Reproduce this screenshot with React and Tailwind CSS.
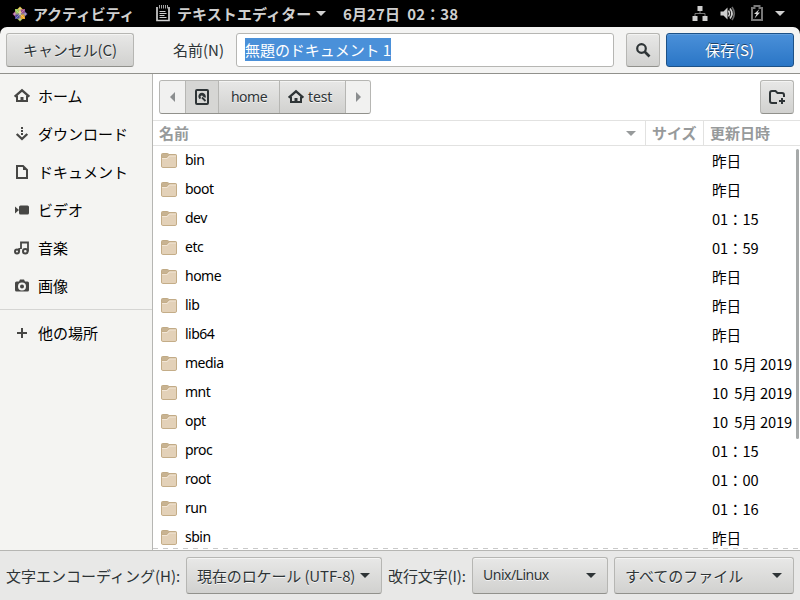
import React from "react";

const files = [
  ["bin", "昨日"],
  ["boot", "昨日"],
  ["dev", "01：15"],
  ["etc", "01：59"],
  ["home", "昨日"],
  ["lib", "昨日"],
  ["lib64", "昨日"],
  ["media", "10  5月 2019"],
  ["mnt", "10  5月 2019"],
  ["opt", "10  5月 2019"],
  ["proc", "01：15"],
  ["root", "01：00"],
  ["run", "01：16"],
  ["sbin", "昨日"],
];

const button =
  "flex items-center rounded-[3px] border border-[#b6b6b3] border-b-[#91918c] bg-linear-to-b from-[#e8e8e7] to-[#d1d1cf] text-[#2e3436] shadow-[inset_0_1px_#f4f4f3] [text-shadow:0_1px_rgba(255,255,255,0.75)]";
const latin = "font-['Noto_Sans','Noto_Sans_CJK_JP',sans-serif] text-[14px] tracking-[-0.5px]";

function Caret({ className = "" }) {
  return (
    <svg viewBox="0 0 10 5" className={`h-[5px] w-[10px] shrink-0 fill-current ${className}`}>
      <path d="M0 0h10L5 5z" />
    </svg>
  );
}

function Icon({ children, className = "" }) {
  return (
    <svg viewBox="0 0 16 16" className={`size-4 shrink-0 ${className}`} fill="none" stroke="currentColor" strokeWidth="2">
      {children}
    </svg>
  );
}

function HomeIcon({ className }) {
  return (
    <Icon className={className}>
      <path d="M.7 8.700 8 2.300l7.300 6.400" strokeWidth="2.200" />
      <path d="M3 7.500V13h10V7.500" />
      <path d="M6.500 9h3v4h-3z" fill="currentColor" stroke="none" />
    </Icon>
  );
}

function FolderIcon() {
  return (
    <svg viewBox="0 0 16 16" className="size-4 shrink-0">
      <path d="M.5 13V2.500Q.5 1.500 1.500 1.500h5q1 0 1.300 1h6.700q1 0 1 1V13z" fill="#c8b392" stroke="#c0aa85" />
      <path d="M.5 5.500h5.300L8 3h6.500q1 0 1 1v10q0 1.500-1.300 1.500H1.800Q.5 15.500 .5 14z" fill="#e3d1b8" stroke="#c4ad88" />
      <path d="M1 6.500h5.300l2-2.500H15" stroke="#f2e6d6" fill="none" />
    </svg>
  );
}

function SidebarItem({ label, children }) {
  return (
    <div className="flex h-[38px] items-center gap-2 pl-[14px] text-black">
      <span className="text-[#474745]">{children}</span>
      <span>{label}</span>
    </div>
  );
}

function TopBar() {
  return (
    <div className="flex h-[27px] shrink-0 items-center bg-black text-[15px] font-bold text-[#cfcfcf]">
      <svg viewBox="0 0 16 16" className="ml-3 size-4">
        <path d="M3 3h4.500v4.500H3z" fill="#9ccd5a" />
        <path d="M8.500 3H13v4.500H8.500z" fill="#9c4f91" />
        <path d="M3 8.500h4.500V13H3z" fill="#4b4aa0" />
        <path d="M8.500 8.500H13V13H8.500z" fill="#efa724" />
        <path d="M8 .5l3 3H5zM8 3l1.500 4h-3z" fill="#e5c94b" />
        <path d="M.5 8l3-3v6z" fill="#b45b9c" />
        <path d="M15.500 8l-3 3V5z" fill="#6f66ae" />
        <path d="M8 15.500l-3-3h6z" fill="#a5b95b" />
        <path d="M8 2v12M2 8h12" stroke="#eadfda" strokeWidth=".9" />
        <path d="m4 4 8 8M12 4l-8 8" stroke="#eadfda" strokeWidth=".4" />
      </svg>
      <span className="ml-[5px] w-[101px] whitespace-nowrap tracking-[-0.15px]">アクティビティ</span>
      <svg viewBox="0 0 14 17" className="-mt-px ml-[22px] h-[17px] w-[14px]" fill="none" stroke="currentColor">
        <path d="M1 2v13.500h12V2" strokeWidth="1.700" />
        <path d="M3.500 0v3.500M5.500 0v3.500M7.500 0v3.500M9.500 0v3.500M11.500 0v3.500" strokeWidth=".8" />
        <path d="M3.500 6.500h6M3.500 8.500h7M3.500 10.500h5M3.500 12.500h7" />
      </svg>
      <span className="ml-[7px] w-[136px] whitespace-nowrap tracking-[0.1px]">テキストエディター</span>
      <Caret className="ml-[3px]" />
      <span className="ml-[17px] whitespace-pre tracking-[0.13px]">6月27日  02：38</span>
      <div className="ml-auto flex items-center pr-[15px]">
        <svg viewBox="0 0 16 16" className="size-4 fill-current">
          <path d="M5.500 0h5v5h-5zM.5 10h5v5h-5zM10.500 10h5v5h-5z" />
          <path d="M8 5v2.500M3 10V7.500h10V10" fill="none" stroke="#777" />
        </svg>
        <svg viewBox="0 0 16 16" className="ml-[12px] size-4" fill="none" stroke="currentColor">
          <path d="M.5 5.500h3L7.500 1.500v12l-4-4h-3z" fill="currentColor" stroke="none" />
          <path d="M8.500 4.500q2 3 0 6" strokeWidth="1.500" />
          <path d="M10 2.500q4 5 0 10" strokeWidth="1.700" />
          <path d="M12 1q4.500 6.500 0 13" stroke="#666" strokeWidth="1.700" />
        </svg>
        <svg viewBox="0 0 12 16" className="-mt-px ml-[15px] h-4 w-3">
          <path d="M1 3h2.500V1h5v2H11v12H1z" fill="none" stroke="#777" strokeWidth="2" />
          <path d="M8.500 4 3 9h2.500L3.500 13.500l5.500-6H6.500z" fill="#d5d5d5" />
        </svg>
        <Caret className="ml-[12px]" />
      </div>
    </div>
  );
}

function HeaderBar() {
  return (
    <div className="h-[47px] shrink-0 bg-black">
      <div className="flex h-full items-center rounded-t-[7px] border-b border-[#91918c] bg-[#f4f4f3] pl-[6px] pr-[6px]">
        <button className={`${button} h-[34px] w-[128px] justify-center`}>
          <span className="tracking-[-0.1px]">キャンセル(C)</span>
        </button>
        <span className="ml-[39px] w-[63px] text-[#2e3436]">名前(N)</span>
        <div className="flex h-[34px] w-[378px] items-center rounded-[3px] border border-[#b6b6b3] bg-white pl-2">
          <span className="-mt-px h-[23px] bg-[#4a90d9] leading-[24px] tracking-[-0.05px] text-white">無題のドキュメント 1</span>
        </div>
        <button className={`${button} ml-3 size-[34px] justify-center`}>
          <Icon>
            <circle cx="6.500" cy="6.500" r="4.300" strokeWidth="2.200" />
            <path d="m9.500 9.500 5 5" strokeWidth="2.600" />
          </Icon>
        </button>
        <button className="ml-[6px] h-[34px] w-[128px] rounded-[3px] border border-[#1c5187] bg-linear-to-b from-[#4a90d9] to-[#2a76c6] pr-[1px] text-white shadow-[inset_0_1px_#629fde] [text-shadow:0_-1px_rgba(0,0,0,0.5)]">
          保存(S)
        </button>
      </div>
    </div>
  );
}

function Sidebar() {
  return (
    <div className="w-[153px] shrink-0 border-r border-[#b6b6b3] bg-[#f4f4f2] pt-[3px]">
      <SidebarItem label="ホーム"><HomeIcon /></SidebarItem>
      <SidebarItem label="ダウンロード">
        <Icon>
          <path d="M8 1v2M8 4v2M8 7v2" />
          <path d="m2.700 8 5.300 5 5.300-5" strokeWidth="2.300" />
        </Icon>
      </SidebarItem>
      <SidebarItem label="ドキュメント">
        <Icon><path d="M3 2h6l4 4v8H3z" /><path d="M9 2v4h4z" fill="currentColor" stroke="none" /></Icon>
      </SidebarItem>
      <SidebarItem label="ビデオ">
        <Icon><path d="M1 4.500 5 8l-4 3.500zM6.500 3.500h7q1.500 0 1.500 1.500v6q0 1.500-1.500 1.500h-7Q5 12.500 5 11V5q0-1.500 1.500-1.500z" fill="currentColor" stroke="none" /></Icon>
      </SidebarItem>
      <SidebarItem label="音楽">
        <Icon>
          <circle cx="3" cy="11.500" r="2" />
          <circle cx="11.300" cy="11.300" r="2.300" />
          <path d="M5.200 11.500V8M7 9V2.500h7V11.500" strokeWidth="1.800" />
        </Icon>
      </SidebarItem>
      <SidebarItem label="画像">
        <Icon>
          <path fillRule="evenodd" fill="currentColor" stroke="none" d="M2.500 3.500H5l1-2h4l1 2h2.500q1.500 0 1.500 1.500v7q0 1.500-1.500 1.500h-11Q1 13.500 1 12V5q0-1.500 1.500-1.500zM8 4.500a4 4 0 1 0 0 8 4 4 0 0 0 0-8zm0 2a2 2 0 1 1 0 4 2 2 0 0 1 0-4z" />
        </Icon>
      </SidebarItem>
      <div className="mt-[4px] mb-[4px] h-px bg-[#d5d5d3]" />
      <SidebarItem label="他の場所"><Icon><path d="M8 3v10M3 8h10" /></Icon></SidebarItem>
    </div>
  );
}

function PathBar() {
  return (
    <div className="flex h-[46px] shrink-0 items-center justify-between pl-[6px] pr-[6px]">
      <div className={`${button} ${latin} h-[34px] w-[212px] overflow-hidden`}>
        <div className="flex h-full w-[26px] items-center justify-center border-r border-[#b6b6b3] bg-[#f1f1f0] text-[#8b8e8f]">
          <svg viewBox="0 0 5 10" className="h-[10px] w-[5px] fill-current"><path d="M5 0v10L0 5z" /></svg>
        </div>
        <div className="flex h-full w-[33px] items-center justify-center border-r border-[#b6b6b3] bg-[#d6d6d4]">
          <Icon>
            <rect x="2" y="1" width="12" height="14" rx="1" />
            <path fillRule="evenodd" d="M8 3.800a3.700 3.700 0 0 0-2.600 6.300Q6.700 10 7 8.700a1.200 1.200 0 1 1 1.900-1.300L11.500 9A3.700 3.700 0 0 0 8 3.800z" fill="currentColor" stroke="none" />
            <path d="m8 8.500 3.500 3.500" strokeWidth="1.800" />
          </Icon>
        </div>
        <div className="flex h-full w-[61px] items-center justify-center border-r border-[#b6b6b3]">home</div>
        <div className="flex h-full w-[66px] items-center gap-1 border-r border-[#b6b6b3] pl-2">
          <HomeIcon /><span className="tracking-[-0.1px]">test</span>
        </div>
        <div className="flex h-full flex-1 items-center justify-center bg-[#f1f1f0] text-[#8b8e8f]">
          <svg viewBox="0 0 5 10" className="h-[10px] w-[5px] fill-current"><path d="M0 0v10l5-5z" /></svg>
        </div>
      </div>
      <button className={`${button} size-[34px] justify-center`}>
        <Icon>
          <path d="M8 14H3Q1 14 1 12V4Q1 2 3 2h3.500l2 2H13q2 0 2 2v2" />
          <path d="M13 9v6M10 12h6" />
        </Icon>
      </button>
    </div>
  );
}

function FileList() {
  return (
    <div className="flex min-w-0 flex-1 flex-col bg-white">
      <PathBar />
      <div className="flex h-[26px] shrink-0 border-y border-[#e2e2e1] font-bold leading-[24px] text-[#979a9b]">
        <div className="flex w-[493px] items-center justify-between border-r border-[#e2e2e1] pl-[6px] pr-[9px]">
          <span>名前</span><Caret />
        </div>
        <div className="w-[58px] border-r border-[#e2e2e1] pl-[6px]">サイズ</div>
        <div className="pl-[6px]">更新日時</div>
      </div>
      <div className="relative h-[404px] overflow-hidden text-black">
        <div className="-mt-px">
          {files.map(([name, date]) => (
            <div key={name} className="flex h-[29px] items-center pl-2">
              <FolderIcon />
              <span className={`${latin} ml-2 w-[527px] leading-[20px]`}>{name}</span>
              <span className="whitespace-pre pt-[2px] text-[14.67px] tracking-[-0.12px]">{date}</span>
            </div>
          ))}
        </div>
        <div className="absolute right-px top-[3px] h-[290px] w-[3px] rounded-full bg-[#a6a9a9]" />
        <div className="absolute bottom-px left-0 h-px w-full bg-[repeating-linear-gradient(90deg,#c9c9c9_0_5px,transparent_5px_10px)]" />
      </div>
    </div>
  );
}

function Footer() {
  return (
    <div className="flex h-[50px] shrink-0 items-center border-t border-[#b6b6b3] bg-[#e8e8e7] pl-[6px] text-[#2e3436]">
      <span className="w-[180px] whitespace-nowrap">文字エンコーディング(H):</span>
      <button className={`${button} h-[37px] w-[196px] justify-between pl-[10px] pr-[11px]`}>
        <span className="whitespace-nowrap tracking-[-0.12px]">現在のロケール (UTF-8)</span><Caret />
      </button>
      <span className="ml-[6px] w-[84px] whitespace-nowrap tracking-[-0.1px]">改行文字(I):</span>
      <button className={`${button} h-[37px] w-[136px] justify-between pl-[10px] pr-[11px]`}>
        <span className={`${latin} -mt-px`}>Unix/Linux</span><Caret />
      </button>
      <button className={`${button} ml-[6px] h-[37px] w-[180px] justify-between pl-[10px] pr-[11px]`}>
        <span>すべてのファイル</span><Caret />
      </button>
    </div>
  );
}

export default function App() {
  return (
    <div className="flex h-[600px] w-[800px] flex-col overflow-hidden font-['Noto_Sans_CJK_JP',sans-serif] text-[15px] leading-[22px]">
      <TopBar />
      <HeaderBar />
      <div className="flex h-[476px] shrink-0">
        <Sidebar />
        <FileList />
      </div>
      <Footer />
    </div>
  );
}
